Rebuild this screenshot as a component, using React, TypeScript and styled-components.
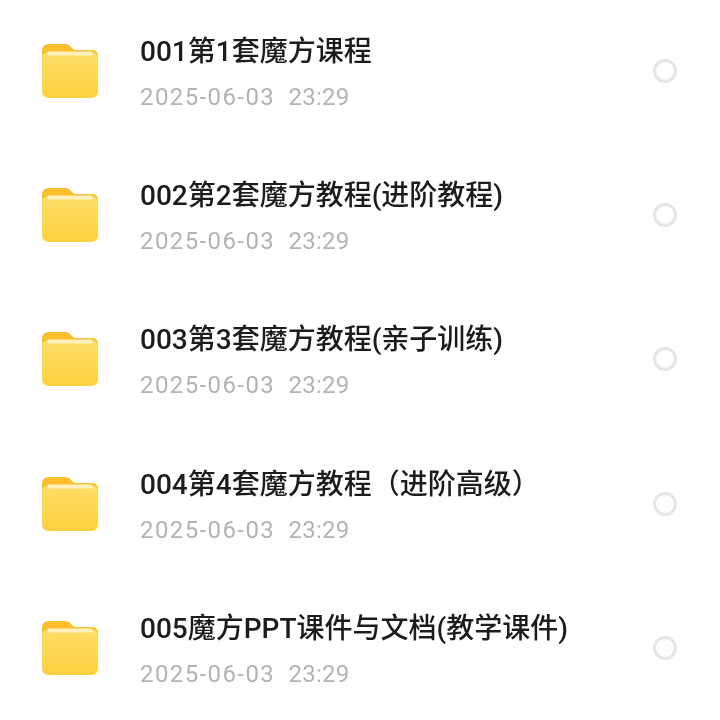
import React from "react";
import styled, { createGlobalStyle } from "styled-components";

const GlobalStyle = createGlobalStyle`
  html, body {
    margin: 0;
    padding: 0;
    background: #ffffff;
  }
`;

const List = styled.div`
  width: 720px;
  height: 720px;
  overflow: hidden;
  display: flex;
  flex-direction: column;
  font-family: "Roboto", "Noto Sans CJK SC", sans-serif;
`;

const Row = styled.div`
  flex: 0 0 144.2px;
  display: flex;
  align-items: center;
  padding: 0 43px 0 42px;
  box-sizing: border-box;
`;

const FolderIcon = styled.svg`
  flex: none;
  width: 57px;
  height: 56px;
  margin: -2px 41px 0 0;
  filter: blur(0.5px);
`;

const Info = styled.div`
  flex: 1;
  min-width: 0;
  display: flex;
  flex-direction: column;
  gap: 12px;
  margin-top: 2px;
`;

const Title = styled.div`
  font-size: 28px;
  font-weight: 500;
  line-height: 36px;
  color: #1c1c1c;
  white-space: pre;
  filter: blur(0.4px);
`;

const Time = styled.div`
  font-size: 24px;
  line-height: 30px;
  color: #b0b4b9;
  white-space: pre;
  filter: blur(0.4px);
`;

const DatePart = styled.span`
  letter-spacing: 1.4px;
`;

const ClockPart = styled.span`
  margin-left: 1.5px;
  letter-spacing: 0.2px;
`;

const Radio = styled.div`
  flex: none;
  width: 24px;
  height: 24px;
  margin-top: -2px;
  box-sizing: border-box;
  border: 3px solid #e6e6e6;
  border-radius: 50%;
  filter: blur(0.6px);
`;

const Folder: React.FC = () => (
  <FolderIcon viewBox="0 0 57 56">
    <defs>
      <linearGradient id="folderFront" x1="0" y1="0" x2="0" y2="1">
        <stop offset="0" stopColor="#fede66" />
        <stop offset="1" stopColor="#fdd03f" />
      </linearGradient>
    </defs>
    <path
      d="M0 8 Q0 1 7 1 H23 Q27 1 29 4 L31 6 Q32 7 34 7 H50 Q56 7 56 13 V30 H0 Z"
      fill="#fbbf2e"
    />
    <path
      d="M0 15 Q0 10 5 10 H51 Q56 10 56 15 V48 Q56 55 49 55 H7 Q0 55 0 48 Z"
      fill="url(#folderFront)"
    />
    <rect x="5" y="8.5" width="46" height="4" rx="2" fill="#fdf0bc" />
  </FolderIcon>
);

const items = [
  "001第1套魔方课程",
  "002第2套魔方教程(进阶教程)",
  "003第3套魔方教程(亲子训练)",
  "004第4套魔方教程（进阶高级）",
  "005魔方PPT课件与文档(教学课件)",
];

export default function App() {
  return (
    <>
      <GlobalStyle />
      <List>
        {items.map((name) => (
          <Row key={name}>
            <Folder />
            <Info>
              <Title>{name}</Title>
              <Time>
                <DatePart>2025-06-03</DatePart>
                {"  "}
                <ClockPart>23:29</ClockPart>
              </Time>
            </Info>
            <Radio />
          </Row>
        ))}
      </List>
    </>
  );
}
